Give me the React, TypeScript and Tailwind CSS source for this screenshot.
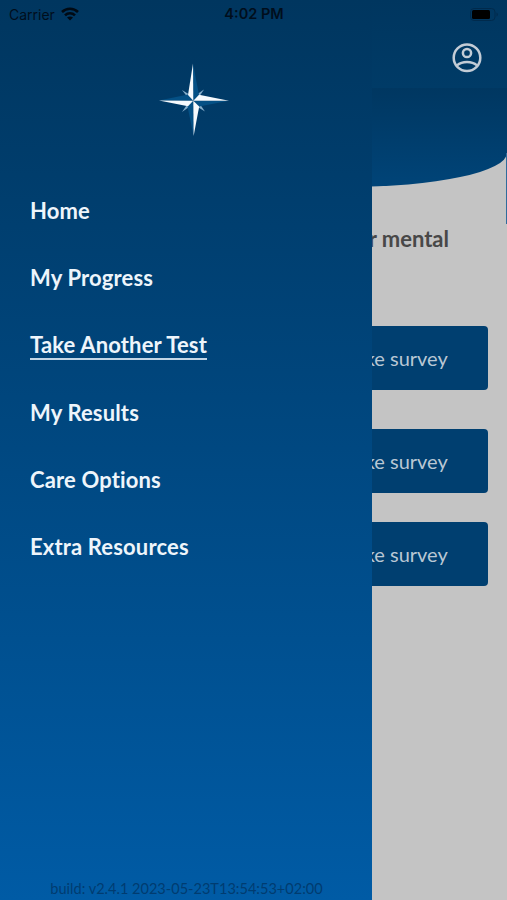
import clsx from 'clsx';

interface MenuItem { label: string; active?: boolean; }

const MENU: MenuItem[] = [
  { label: 'Home' },
  { label: 'My Progress' },
  { label: 'Take Another Test', active: true },
  { label: 'My Results' },
  { label: 'Care Options' },
  { label: 'Extra Resources' },
];

function WifiIcon() {
  return (
    <svg width="18" height="14" viewBox="0 0 18 14" fill="none" stroke="#000a14" strokeWidth="2.6">
      <path d="M1 5 C5.5 0.6 12.5 0.6 17 5" />
      <path d="M4 8.4 C6.8 5.6 11.2 5.6 14 8.4" />
      <path d="M9 13.6 L6 10.6 C7.7 9.1 10.3 9.1 12 10.6 Z" fill="#000a14" stroke="none" />
    </svg>
  );
}

function BatteryIcon() {
  return (
    <svg width="29" height="13" viewBox="0 0 29 13" fill="none">
      <rect x="0.5" y="0.5" width="24.5" height="12" rx="3.5" stroke="#002a4c" />
      <rect x="2" y="2" width="18" height="9" rx="1.5" fill="#000000" />
      <path d="M26.5 4.5 C28.3 5.2 28.3 7.8 26.5 8.5 Z" fill="#002a4c" />
    </svg>
  );
}

function AvatarIcon() {
  return (
    <svg width="30" height="30" viewBox="0 0 30 30" fill="none" stroke="#c3ccd6" strokeWidth="2.5">
      <circle cx="15" cy="14.7" r="13.3" />
      <circle cx="15" cy="10" r="4.1" />
      <path d="M5 22.4 C7.6 20.2 11 19 15 19 C19 19 22.4 20.2 25 22.4" />
    </svg>
  );
}

function CompassLogo() {
  return (
    <svg width="72" height="74" viewBox="0 0 72 74">
      {/* small diagonal points */}
      <g fill="#86aecb">
        <path d="M24 27 L30.5 31 L29 33.5 Z" />
        <path d="M46 26.5 L42 32.5 L39.5 31 Z" />
        <path d="M24 49 L28.5 42.5 L31 44 Z" />
        <path d="M47 48.5 L40.5 44.5 L42.5 42 Z" />
      </g>
      {/* shaded halves */}
      <g fill="#045085">
        <path d="M35 0.5 L41 32 L35.3 37.7 Z" />
        <path d="M71 37.7 L41 43.5 L35.3 37.7 Z" />
        <path d="M35.6 73 L29.5 43.5 L35.3 37.7 Z" />
        <path d="M1 37.5 L30 31.5 L35.3 37.7 Z" />
      </g>
      {/* lit halves */}
      <g fill="#f6fafd">
        <path d="M35 0.5 L30 32 L35.3 37.7 Z" />
        <path d="M71 37.7 L41 31.8 L35.3 37.7 Z" />
        <path d="M35.6 73 L41.2 43.5 L35.3 37.7 Z" />
        <path d="M1 37.5 L30 43.3 L35.3 37.7 Z" />
      </g>
    </svg>
  );
}

function SurveyButton({ className }: { className?: string }) {
  return (
    <button className={clsx('h-16 w-[182px] rounded-[4px] bg-[#003f70] pb-px text-center text-[20px] text-[#b9c7d4]', className)}>
      Take survey
    </button>
  );
}

function SurveyPage() {
  return (
    <div className="flex h-full flex-col">
      <header className="flex h-[88px] shrink-0 items-end justify-end bg-linear-to-b from-[#00365f] to-[#003b67] pr-[25px] pb-[15px]">
        <AvatarIcon />
      </header>
      <div className="h-[98.5px] shrink-0 rounded-br-[160px_34px] bg-linear-to-b from-[#003761] to-[#004478]" />
      <main className="flex flex-col items-end pr-[19.5px]">
        <p className="mt-[36.5px] pr-[38.5px] text-[22px] leading-8 font-bold text-[#484848]">your mental</p>
        <SurveyButton className="mt-[71px]" />
        <SurveyButton className="mt-[39px]" />
        <SurveyButton className="mt-[29px]" />
      </main>
    </div>
  );
}

function Drawer() {
  return (
    <aside className="absolute inset-y-0 left-0 flex w-[372px] flex-col bg-linear-to-b from-[#00365f] to-[#005ba5]">
      <div className="mt-[63px] flex justify-center pl-4">
        <CompassLogo />
      </div>
      <nav className="mt-[60px] flex flex-col items-start gap-[38.2px] pl-[30px]">
        {MENU.map(({ label, active }) => (
          <a
            key={label}
            className={clsx(
              'h-[29px] text-[22px] leading-[28px] font-bold tracking-[0.15px] text-[#eef5fb] [font-variant-ligatures:none]',
              active && 'border-b-2 border-[#c3d6e6]',
            )}
          >
            {label}
          </a>
        ))}
      </nav>
      <p className="mt-auto pl-px text-center text-[14.55px] leading-[22px] text-[#003c70]">build: v2.4.1 2023-05-23T13:54:53+02:00</p>
    </aside>
  );
}

export default function App() {
  return (
    <div className="relative h-[900px] w-[507px] overflow-hidden bg-[#c4c4c4] font-['Lato',sans-serif]">
      <SurveyPage />
      {/* edge of the screen behind */}
      <div className="absolute top-[153px] right-0 h-[71px] w-px bg-[#2f6c9c]" />
      <Drawer />
      <div className="absolute inset-x-0 top-0 grid h-7 grid-cols-3 items-center pr-2 pl-[9px] font-['Inter',sans-serif] text-[14px] text-[#000e1c]">
        <div className="flex items-center gap-1.5">
          <span>Carrier</span>
          <WifiIcon />
        </div>
        <span className="text-center text-[14.5px] font-semibold">4:02 PM</span>
        <div className="flex justify-end">
          <BatteryIcon />
        </div>
      </div>
    </div>
  );
}
